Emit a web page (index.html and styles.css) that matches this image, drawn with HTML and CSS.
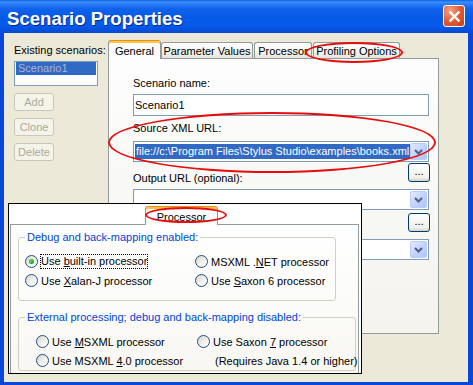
FILE: index.html
```html
<!DOCTYPE html>
<html lang="en">
<head>
    <meta charset="UTF-8">
    <meta name="viewport" content="width=device-width, initial-scale=1.0">
    <title>Scenario Properties</title>
    <link rel="stylesheet" href="styles.css">
</head>
<body>

<div class="window">
    <div class="titlebar">
        <span class="title">Scenario Properties</span>
        <span class="close-btn">
            <svg width="13" height="13" viewBox="0 0 13 13">
                <path d="M2.5 2.5 L10.5 10.5 M10.5 2.5 L2.5 10.5" stroke="#fff" stroke-width="2.4" stroke-linecap="square"/>
            </svg>
        </span>
    </div>

    <div class="client">
        <!-- left column: list of scenarios -->
        <div class="scenarios">
            <div class="caption">Existing scenarios:</div>
            <div class="listbox">
                <div class="list-item selected">Scenario1</div>
            </div>
            <div class="push-btn disabled">Add</div>
            <div class="push-btn disabled">Clone</div>
            <div class="push-btn disabled">Delete</div>
        </div>

        <!-- tabbed settings -->
        <div class="tabs">
            <div class="tab-row">
                <div class="tab active tab-general">General</div>
                <div class="tab tab-params">Parameter Values</div>
                <div class="tab tab-processor">Processor</div>
                <div class="tab tab-profiling">Profiling Options</div>
            </div>
            <div class="tab-pane">
                <div class="caption">Scenario name:</div>
                <div class="textbox">Scenario1</div>

                <div class="caption gap">Source XML URL:</div>
                <div class="combo">
                    <span class="combo-text"><span class="selection">file://c:\Program Files\Stylus Studio\examples\books.xml</span></span>
                    <span class="drop-btn">
                        <svg width="9" height="6" viewBox="0 0 9 6"><path d="M1 1 L4.5 4.5 L8 1" fill="none" stroke="#4D6185" stroke-width="2"/></svg>
                    </span>
                </div>

                <div class="browse-row">
                    <span class="caption">Output URL (optional):</span>
                    <span class="dots-btn">...</span>
                </div>
                <div class="combo">
                    <span class="combo-text"></span>
                    <span class="drop-btn">
                        <svg width="9" height="6" viewBox="0 0 9 6"><path d="M1 1 L4.5 4.5 L8 1" fill="none" stroke="#4D6185" stroke-width="2"/></svg>
                    </span>
                </div>

                <div class="browse-row">
                    <span class="caption"></span>
                    <span class="dots-btn">...</span>
                </div>
                <div class="combo">
                    <span class="combo-text"></span>
                    <span class="drop-btn">
                        <svg width="9" height="6" viewBox="0 0 9 6"><path d="M1 1 L4.5 4.5 L8 1" fill="none" stroke="#4D6185" stroke-width="2"/></svg>
                    </span>
                </div>
            </div>
        </div>
    </div>

    <!-- inset: the Processor tab pasted over the dialog -->
    <div class="inset">
        <div class="inset-tabs">
            <div class="tab active inset-tab">Processor</div>
        </div>
        <div class="inset-pane">
            <fieldset class="group group-debug">
                <legend>Debug and back-mapping enabled:</legend>
                <div class="options">
                    <div class="option"><span class="radio checked"></span><span class="focus">Use <u>b</u>uilt-in processor</span></div>
                    <div class="option"><span class="radio"></span><span class="text">MSXML .<u>N</u>ET processor</span></div>
                    <div class="option"><span class="radio"></span><span class="text">Use <u>X</u>alan-J processor</span></div>
                    <div class="option"><span class="radio"></span><span class="text">Use <u>S</u>axon 6 processor</span></div>
                </div>
            </fieldset>

            <fieldset class="group group-external">
                <legend>External processing; debug and back-mapping disabled:</legend>
                <div class="options">
                    <div class="option"><span class="radio"></span><span class="text">Use <u>M</u>SXML processor</span></div>
                    <div class="option"><span class="radio"></span><span class="text">Use Saxon <u>7</u> processor</span></div>
                    <div class="option"><span class="radio"></span><span class="text">Use MSXML <u>4</u>.0 processor</span></div>
                    <div class="option note">(Requires Java 1.4 or higher)</div>
                </div>
            </fieldset>
        </div>
    </div>

    <!-- red highlight rings -->
    <div class="mark mark-profiling"></div>
    <div class="mark mark-source"></div>
    <div class="mark mark-processor"></div>
</div>

</body>
</html>
```

FILE: styles.css
```css
* {
    box-sizing: border-box;
}

body {
    margin: 0;
    font-family: "Liberation Sans", Arial, sans-serif;
    font-size: 11px;
    color: #000;
    background: #fff;
}

.window {
    position: relative;
    width: 473px;
    height: 385px;
    background: #0A46DA;
    display: flex;
    flex-direction: column;
    overflow: hidden;
}

/* title bar */
.titlebar {
    height: 33px;
    flex-shrink: 0;
    display: flex;
    justify-content: space-between;
    align-items: flex-start;
    padding: 0 8px 0 7px;
    background: linear-gradient(to bottom, #0B5FE6 0px, #3C8FFA 2px, #2C7DF5 4px, #0F62EA 9px, #0559E6 18px, #0659EA 26px, #064FD8 31px, #0A45CF 33px);
}

.title {
    margin-top: 8px;
    color: #fff;
    font-size: 18.6px;
    font-weight: bold;
    line-height: 22px;
    text-shadow: 1px 1px 0 #0C2A8C;
}

.close-btn {
    margin-top: 5px;
    width: 22px;
    height: 22px;
    border: 1px solid #fff;
    border-radius: 3px;
    background: radial-gradient(circle at 30% 25%, #F4A386 0, #E45B34 50%, #C43F18 100%);
    display: flex;
    align-items: center;
    justify-content: center;
}

/* dialog body */
.client {
    flex: 1;
    margin: 0 5px 3px 4px;
    background: #ECE9D8;
    display: flex;
    align-items: flex-start;
}

.caption {
    height: 13px;
    line-height: 13px;
    white-space: nowrap;
}

.scenarios {
    width: 84px;
    margin-left: 10px;
    padding-top: 11px;
    display: flex;
    flex-direction: column;
}

.listbox {
    margin-top: 4px;
    height: 25px;
    border: 1px solid #7F9DB9;
    background: #fff;
    padding: 0 1px;
}

.list-item {
    line-height: 13px;
    padding-left: 2px;
}

.list-item.selected {
    background: #316AC5;
    color: #AEB4D4;
}

.push-btn {
    margin-top: 7px;
    width: 40px;
    height: 18px;
    border: 1px solid #C9C7BA;
    border-radius: 3px;
    background: #F5F4EA;
    text-align: center;
    line-height: 16px;
}

.push-btn.disabled {
    color: #ACA899;
}

/* tabs */
.tabs {
    margin-left: 10px;
    margin-top: 7px;
    width: 331px;
}

.tab-row {
    display: flex;
    align-items: flex-end;
    height: 18px;
}

.tab {
    height: 16px;
    border: 1px solid #919B9C;
    border-bottom: none;
    border-radius: 3px 3px 0 0;
    background: linear-gradient(#FFFFFF, #F4F4F0 60%, #E4E3DC);
    text-align: center;
    padding-top: 1px;
    line-height: 14px;
    white-space: nowrap;
    overflow: hidden;
}

.tab.active {
    position: relative;
    z-index: 1;
    height: 19px;
    margin-bottom: -1px;
    padding-top: 3px;
    background: #FCFCFE;
    border-top-color: #E68B2C;
    box-shadow: inset 0 2px 0 #FFC73C;
}

.tab-general { width: 53px; }
.tab-params { width: 92px; }
.tab-processor { width: 58px; margin-left: 1px; }
.tab-profiling { width: 87px; margin-left: 1px; }

.tab-pane {
    height: 276px;
    border: 1px solid #919B9C;
    background: linear-gradient(#FDFDFD, #F4F3EE);
    padding: 18px 9px 0 24px;
}

.textbox {
    margin-top: 4px;
    height: 22px;
    border: 1px solid #7F9DB9;
    background: #fff;
    padding-left: 1px;
    line-height: 20px;
}

.caption.gap {
    margin-top: 6px;
}

.combo {
    margin-top: 6px;
    height: 21px;
    border: 1px solid #7F9DB9;
    background: #fff;
    padding: 1px;
    display: flex;
    align-items: center;
}

.combo-text {
    flex: 1;
    white-space: nowrap;
    overflow: hidden;
}

.selection {
    background: #316AC5;
    color: #fff;
    padding: 0 1px;
    line-height: 15px;
    display: inline-block;
}

.drop-btn {
    width: 17px;
    height: 17px;
    border: 1px solid #B9CCF8;
    border-radius: 2px;
    background: linear-gradient(135deg, #E4ECFE, #C3D4FB 50%, #B0C5F5);
    display: flex;
    align-items: center;
    justify-content: center;
}

.browse-row {
    margin-top: 1px;
    height: 22px;
    display: flex;
    justify-content: space-between;
    align-items: flex-end;
}

.browse-row + .combo {
    margin-top: 4px;
}

.combo + .browse-row + .combo + .browse-row {
    margin-top: 3px;
}

.dots-btn {
    align-self: flex-start;
    width: 22px;
    height: 19px;
    margin-right: -1px;
    border: 1px solid #003C74;
    border-radius: 3px;
    background: linear-gradient(#FFFFFF, #F1F0EA 80%, #D8D2C6);
    text-align: center;
    line-height: 15px;
}

/* inset panel */
.inset {
    position: absolute;
    left: 8px;
    top: 203px;
    width: 354px;
    height: 171px;
    border: 1px solid #000;
    background: #fff;
    overflow: hidden;
}

.inset-tabs {
    height: 20px;
    display: flex;
    align-items: flex-end;
    padding-left: 136px;
}

.inset-tab {
    width: 73px;
    height: 20px;
    padding-top: 3px;
}

.inset-pane {
    margin-left: 1px;
    width: 349px;
    height: 170px;
    border: 1px solid #919B9C;
    background: linear-gradient(#FFFFFF, #F7F6F1);
    padding-top: 6px;
}

.group {
    margin: 0 0 0 7px;
    padding: 0;
    border: 1px solid #D0D0BF;
    border-radius: 3px;
    min-width: 0;
}

.group legend {
    margin-left: 6px;
    padding: 0 2px;
    line-height: 13px;
    color: #0046D5;
}

.group-debug {
    width: 318px;
    padding: 8px 0 10px;
}

.group-external {
    width: 338px;
    margin-top: 10px;
    padding: 8px 0 0;
}

.options {
    display: grid;
    grid-auto-rows: 19px;
}

.group-debug .options {
    padding-left: 6px;
    grid-template-columns: 170px 1fr;
}

.group-external .options {
    padding-left: 17px;
    grid-template-columns: 161px 1fr;
}

.option {
    display: flex;
    align-items: center;
    white-space: nowrap;
}

.option .text {
    margin-left: 3px;
}

.option .focus {
    margin-left: 2px;
    padding: 1px;
    line-height: 13px;
    outline: 1px dotted #000;
    outline-offset: -1px;
}

.option.note {
    padding-left: 18px;
}

.radio {
    position: relative;
    flex-shrink: 0;
    width: 13px;
    height: 13px;
    border: 1px solid #1C5180;
    border-radius: 50%;
    background: linear-gradient(135deg, #D6D6CE, #F4F4F0 60%, #FFFFFF);
}

.radio.checked::after {
    content: "";
    position: absolute;
    left: 3px;
    top: 3px;
    width: 5px;
    height: 5px;
    border-radius: 50%;
    background: radial-gradient(circle at 40% 40%, #63DA63, #21A121 70%);
}

/* red rings drawn over the screenshot */
.mark {
    position: absolute;
    z-index: 5;
    border: 2px solid #E80C0C;
    border-radius: 50%;
    pointer-events: none;
}

.mark-profiling {
    left: 305px;
    top: 42px;
    width: 98px;
    height: 21px;
}

.mark-source {
    left: 108px;
    top: 112px;
    width: 328px;
    height: 61px;
}

.mark-processor {
    left: 145px;
    top: 207px;
    width: 82px;
    height: 16px;
}
```
